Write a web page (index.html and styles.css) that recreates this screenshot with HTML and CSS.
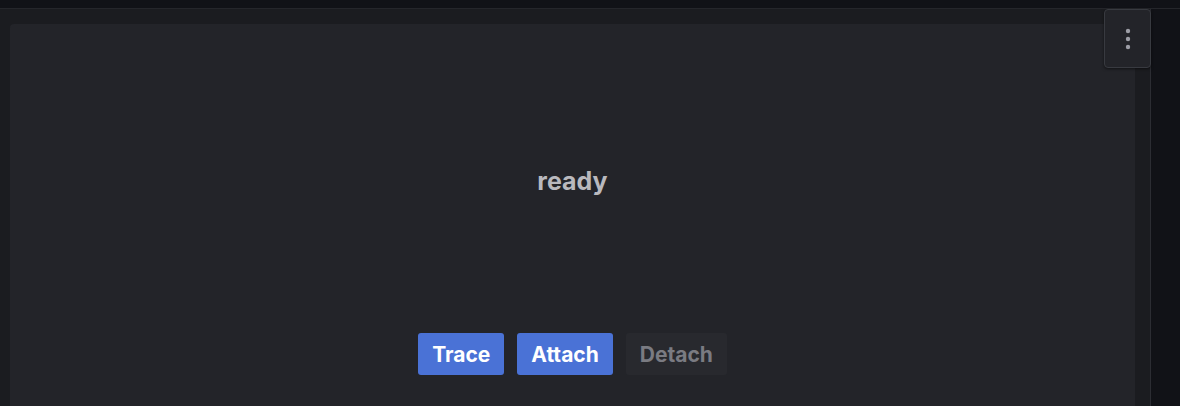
FILE: index.html
```html
<!DOCTYPE html>
<html>
<head>
<meta charset="utf-8">
<link rel="stylesheet" href="styles.css">
</head>
<body>
<div class="topbar"></div>
<div class="main">
  <div class="panel">
    <div class="card">
      <div class="status">ready</div>
      <div class="actions">
        <button class="btn primary">Trace</button>
        <button class="btn primary">Attach</button>
        <button class="btn disabled">Detach</button>
      </div>
    </div>
    <button class="menu" aria-label="Menu">
      <svg width="6" height="22" viewBox="0 0 6 22"><circle cx="3" cy="3" r="2.2" fill="#9d9ea6"/><circle cx="3" cy="11" r="2.2" fill="#9d9ea6"/><circle cx="3" cy="19" r="2.2" fill="#9d9ea6"/></svg>
    </button>
  </div>
  <div class="rest"></div>
</div>
</body>
</html>
```

FILE: styles.css
```css
html, body {
  margin: 0;
  height: 100%;
  background: #111217;
  font-family: Inter, "Liberation Sans", sans-serif;
  overflow: hidden;
}
.topbar {
  height: 8px;
  background: #111217;
  border-bottom: 1px solid #25262b;
}
.main {
  display: flex;
  height: calc(100% - 9px);
}
.panel {
  position: relative;
  width: 1125px;
  padding: 15px 15px 0 10px;
  background: #1b1c20;
  border-right: 1px solid #2c2d33;
  display: flex;
}
.rest {
  flex: 1;
  background: #111217;
}
.card {
  flex: 1;
  background: #232429;
  border-radius: 4px 4px 0 0;
  display: flex;
  flex-direction: column;
  align-items: center;
}
.status {
  margin-top: 142px;
  font-size: 25px;
  font-weight: 700;
  color: #b9b9be;
  line-height: 30px;
}
.actions {
  margin-top: 137px;
  display: flex;
  gap: 13px;
}
.btn {
  height: 42px;
  padding: 0 14px;
  border: none;
  border-radius: 3px;
  font-family: Inter, "Liberation Sans", sans-serif;
  font-size: 21px;
  font-weight: 700;
  cursor: pointer;
}
.btn.primary {
  background: #4a72d6;
  color: #ffffff;
}
.btn.disabled {
  background: #28292e;
  color: #7a7b82;
}
.menu {
  position: absolute;
  top: 0;
  right: -1px;
  box-sizing: border-box;
  width: 47px;
  height: 59px;
  background: #232429;
  border: 1px solid #383a40;
  border-radius: 4px;
  display: flex;
  align-items: center;
  justify-content: center;
  padding: 0;
  box-shadow: 0 1px 3px rgba(0,0,0,0.5);
}
```
